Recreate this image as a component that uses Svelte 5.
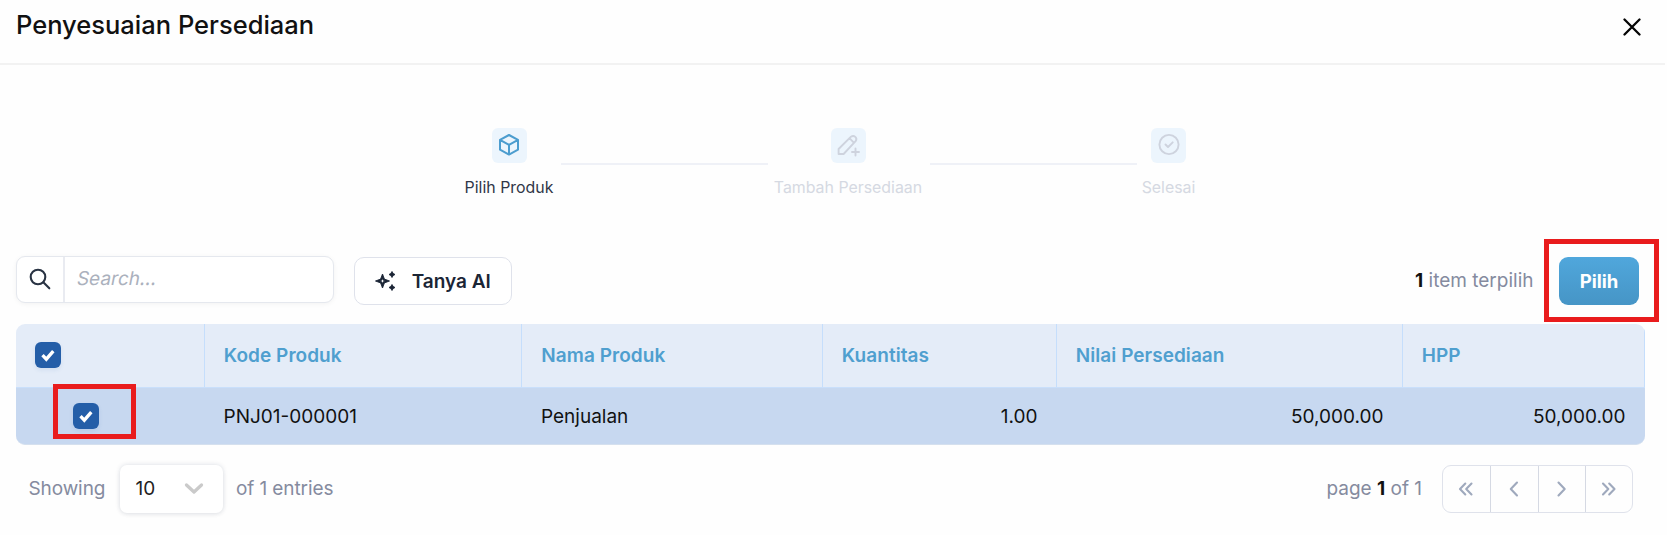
<script>
  const columns = ['Kode Produk', 'Nama Produk', 'Kuantitas', 'Nilai Persediaan', 'HPP'];
  const row = [
    { value: 'PNJ01-000001' },
    { value: 'Penjualan' },
    { value: '1.00', numeric: true },
    { value: '50,000.00', numeric: true },
    { value: '50,000.00', numeric: true }
  ];
  const pager = [
    'M7.300 2.600 2 8l5.300 5.400M13.500 2.600 8.200 8l5.300 5.400',
    'M11 1.500 4.800 8l6.200 6.500',
    'M5.500 1.500 11.700 8 5.500 14.500',
    'M3 2.600 8.300 8 3 13.400M9.200 2.600 14.500 8l-5.300 5.400'
  ];
</script>

{#snippet checkbox()}
  <span class="checkbox">
    <svg width="26" height="26" viewBox="0 0 26 26" fill="none" stroke="#fff" stroke-width="3.3"><path d="m7.5 13.2 3.8 4 7-8" /></svg>
  </span>
{/snippet}

<div class="page">
  <header>
    <h1>Penyesuaian Persediaan</h1>
    <button class="close" aria-label="Tutup">
      <svg width="18" height="18" viewBox="0 0 18 18" fill="none" stroke="#050505" stroke-width="2.3" stroke-linecap="round"><path d="m1.5 1.5 15 15m0-15-15 15" /></svg>
    </button>
  </header>

  <div class="steps">
    <div class="step active first">
      <span class="tile">
        <svg width="24" height="24" viewBox="0 0 24 24" fill="none" stroke="#4c9dcf" stroke-width="2" stroke-linejoin="round"><path d="m12 2 9 4.900v9.800l-9 4.900-9-4.900V6.900zM3 6.900l9 5 9-5M12 11.900v9.700" /></svg>
      </span>
      <span>Pilih Produk</span>
    </div>
    <i class="line"></i>
    <div class="step second">
      <span class="tile">
        <svg width="24" height="24" viewBox="0 0 24 24" fill="none" stroke="#ced3de" stroke-width="1.900" stroke-linejoin="round" stroke-linecap="round"><path d="M2.600 21v-5L15 3.700q2.300-1.700 4.300.2t.3 4.300L7.600 21zM13.500 5.200l4.500 4.600M19.500 15.500v7M16 19h7" /></svg>
      </span>
      <span>Tambah Persediaan</span>
    </div>
    <i class="line"></i>
    <div class="step third">
      <span class="tile">
        <svg width="24" height="24" viewBox="0 0 24 24" fill="none" stroke="#ced3de" stroke-width="1.900" stroke-linecap="round" stroke-linejoin="round"><circle cx="12" cy="11.500" r="9.600" /><path d="m8.500 11.500 2.500 2.500L15.700 9.300" /></svg>
      </span>
      <span>Selesai</span>
    </div>
  </div>

  <div class="toolbar">
    <div class="search">
      <span class="glass">
        <svg width="22" height="22" viewBox="0 0 22 22" fill="none" stroke="#293343" stroke-width="2.100" stroke-linecap="round"><circle cx="9" cy="9" r="7.300" /><path d="m14.300 14.300 6 6" /></svg>
      </span>
      <span class="placeholder">Search...</span>
    </div>
    <button class="ai">
      <svg width="21" height="20" viewBox="0 0 21 20" fill="#1b2535"><path fill-rule="evenodd" stroke="#1b2535" stroke-width=".9" stroke-linejoin="round" d="M7.500 3 9.400 8.100 14.500 10l-5.100 1.900L7.500 17l-1.900-5.100L.5 10l5.100-1.900zM7.500 7.200 6.700 9.200 4.700 10l2 .8.8 2 .8-2 2-.8-2-.8z" /><path d="m17 .5 1.100 1.900L20 3.500l-1.900 1.100L17 6.500l-1.100-1.900L14 3.500l1.900-1.100zM17 13.500l1.100 1.900 1.900 1.100-1.900 1.100-1.100 1.900-1.100-1.900-1.900-1.100 1.900-1.100z" stroke="#1b2535" stroke-width=".9" stroke-linejoin="round" /></svg>
      <span>Tanya AI</span>
    </button>
    <div class="selected"><b>1</b> item terpilih</div>
    <div class="pick-wrap">
      <button class="pick">Pilih</button>
      <i class="mark pick-mark"></i>
    </div>
  </div>

  <div class="table">
    <div class="tr head">
      <div class="cell all">{@render checkbox()}</div>
      {#each columns as column}
        <div class="cell">{column}</div>
      {/each}
    </div>
    <div class="tr body">
      <div class="cell one">{@render checkbox()}<i class="mark row-mark"></i></div>
      {#each row as cell}
        <div class="cell" class:numeric={cell.numeric}>{cell.value}</div>
      {/each}
    </div>
  </div>

  <footer>
    <span class="showing">Showing</span>
    <div class="select">
      <span>10</span>
      <svg width="20" height="13" viewBox="0 0 20 13" fill="none" stroke="#cacaca" stroke-width="3.300" stroke-linecap="round" stroke-linejoin="round"><path d="m2.500 3 7.500 7 7.500-7" /></svg>
    </div>
    <span class="entries">of 1 entries</span>
    <span class="count">page <b>1</b> of 1</span>
    <div class="pager">
      {#each pager as path}
        <button aria-label="Halaman">
          <svg width="16" height="16" viewBox="0 0 16 16" fill="none" stroke="#9fa9bd" stroke-width="2.100" stroke-linecap="round" stroke-linejoin="round"><path d={path} /></svg>
        </button>
      {/each}
    </div>
  </footer>
</div>

<style>
  :global(body) { background: #fff; }
  .page { box-sizing: border-box; width: 1667px; height: 535px; overflow: hidden; font-family: Inter, sans-serif; font-size: 19px; color: #111; background: #fefefe; }
  .page * { box-sizing: border-box; }
  .page svg { display: block; flex: none; }
  button { font: inherit; color: inherit; border: 0; background: none; padding: 0; display: flex; align-items: center; justify-content: center; }
  header { height: 65px; border-bottom: 2px solid #f2f2f2; margin-right: 2px; display: flex; justify-content: space-between; padding: 8px 24px 0 16px; }
  h1 { margin: 0; font-size: 25.500px; line-height: 34px; font-weight: 500; white-space: nowrap; }
  .close { height: 37px; }

  .steps { display: flex; padding: 63px 0 0 461px; height: 191px; font-size: 15.900px; color: #d5d9e2; }
  .step { display: flex; flex-direction: column; align-items: center; gap: 14px; line-height: 22px; white-space: nowrap; }
  .first { width: 96px; margin-right: 4px; }
  .second { width: 150px; margin: 0 6.500px 0 5px; }
  .third { width: 56px; margin-left: 4px; }
  .active { color: #303748; }
  .tile { width: 35px; height: 35px; border-radius: 6px; background: #ecf5fd; display: flex; align-items: center; justify-content: center; }
  .tile svg { margin-top: -1px; }
  .line { width: 207px; height: 2px; margin-top: 35px; background: #eff1f7; }

  .toolbar { height: 68px; display: flex; align-items: flex-start; padding-left: 16px; }
  .search { width: 318px; height: 47px; border: 1px solid #e5e8ee; border-radius: 9px; background: #fff; box-shadow: 0 1px 5px #0000000d; display: flex; }
  .glass { width: 48px; border-right: 2px solid #e9ebf1; display: flex; align-items: center; justify-content: center; padding-bottom: 1px; }
  .placeholder { margin-left: 12px; line-height: 44px; transform: skewX(-11deg); color: #abb1bd; }
  .ai { width: 158.500px; height: 48px; margin: 0 0 0 19.500px; border: 1.500px solid #dfe2eb; border-radius: 10px; background: #fff; gap: 16px; font-weight: 600; color: #1b2535; position: relative; top: 1px; white-space: nowrap; }
  .selected { margin-left: auto; line-height: 50px; color: #858b9f; white-space: nowrap; }
  .selected b, .count b { color: #111; }
  .pick-wrap { position: relative; margin: 0 28px 0 25.500px; }
  .pick { width: 80px; height: 48px; margin-top: 0.500px; border-radius: 9px; background: linear-gradient(#50a7dc, #4695c6); color: #fff; font-weight: 700; font-size: 18.500px; }
  .mark { position: absolute; border: 5px solid #e91c1d; }
  .pick-mark { left: -15px; top: -17px; width: 115px; height: 83px; }

  .table { width: 1629px; margin-left: 15.500px; height: 121px; }
  .tr { display: grid; grid-template-columns: 189px 317.500px 300.500px 234px 346px 1fr; }
  .cell { display: flex; align-items: center; padding: 0 19px; white-space: nowrap; }
  .head { height: 64px; background: #e4ecf8; border-radius: 9px 9px 0 0; border-bottom: 1px solid #c9dffb; color: #4f9fcf; font-weight: 600; letter-spacing: 0.05px; overflow: hidden; }
  .head .cell { border-right: 1px solid #c5defc; padding-left: 19.300px; }
  .head .cell:first-child { padding-bottom: 1px; }
  .body { height: 57px; background: #c7d8f0; border-radius: 0 0 9px 9px; border-bottom: 1px solid #d5e0ee; }
  .cell.numeric { justify-content: flex-end; }
  .cell.one { position: relative; padding-left: 57px; }
  .row-mark { left: 37px; top: -4px; width: 83px; height: 55px; }
  .checkbox { width: 26px; height: 26px; border-radius: 6px; background: #245ea8; box-shadow: 0 2px 4px #245ea81a; }

  footer { display: flex; align-items: center; height: 49px; margin-top: 19px; padding: 0 34px 0 28.500px; color: #858b9f; white-space: nowrap; }
  .showing { width: 91px; letter-spacing: -0.1px; }
  .select { width: 103px; height: 48px; margin-top: 1px; border-radius: 7px; background: #fff; box-shadow: 0 0 5px #14285026, 0 2px 5px #00000008; display: flex; align-items: center; justify-content: space-between; padding: 0 19px 1px 16px; color: #222; }
  .entries { margin-left: 13.500px; letter-spacing: -0.1px; }
  .count { margin-left: auto; }
  .pager { margin-left: 20px; width: 191px; height: 48px; border: 1.500px solid #dfe2eb; border-radius: 9px; display: grid; grid-template-columns: repeat(4, 1fr); }
  .pager button { padding-right: 1px; }
  .pager button + button { border-left: 1px solid #d5d9e3; }
</style>
